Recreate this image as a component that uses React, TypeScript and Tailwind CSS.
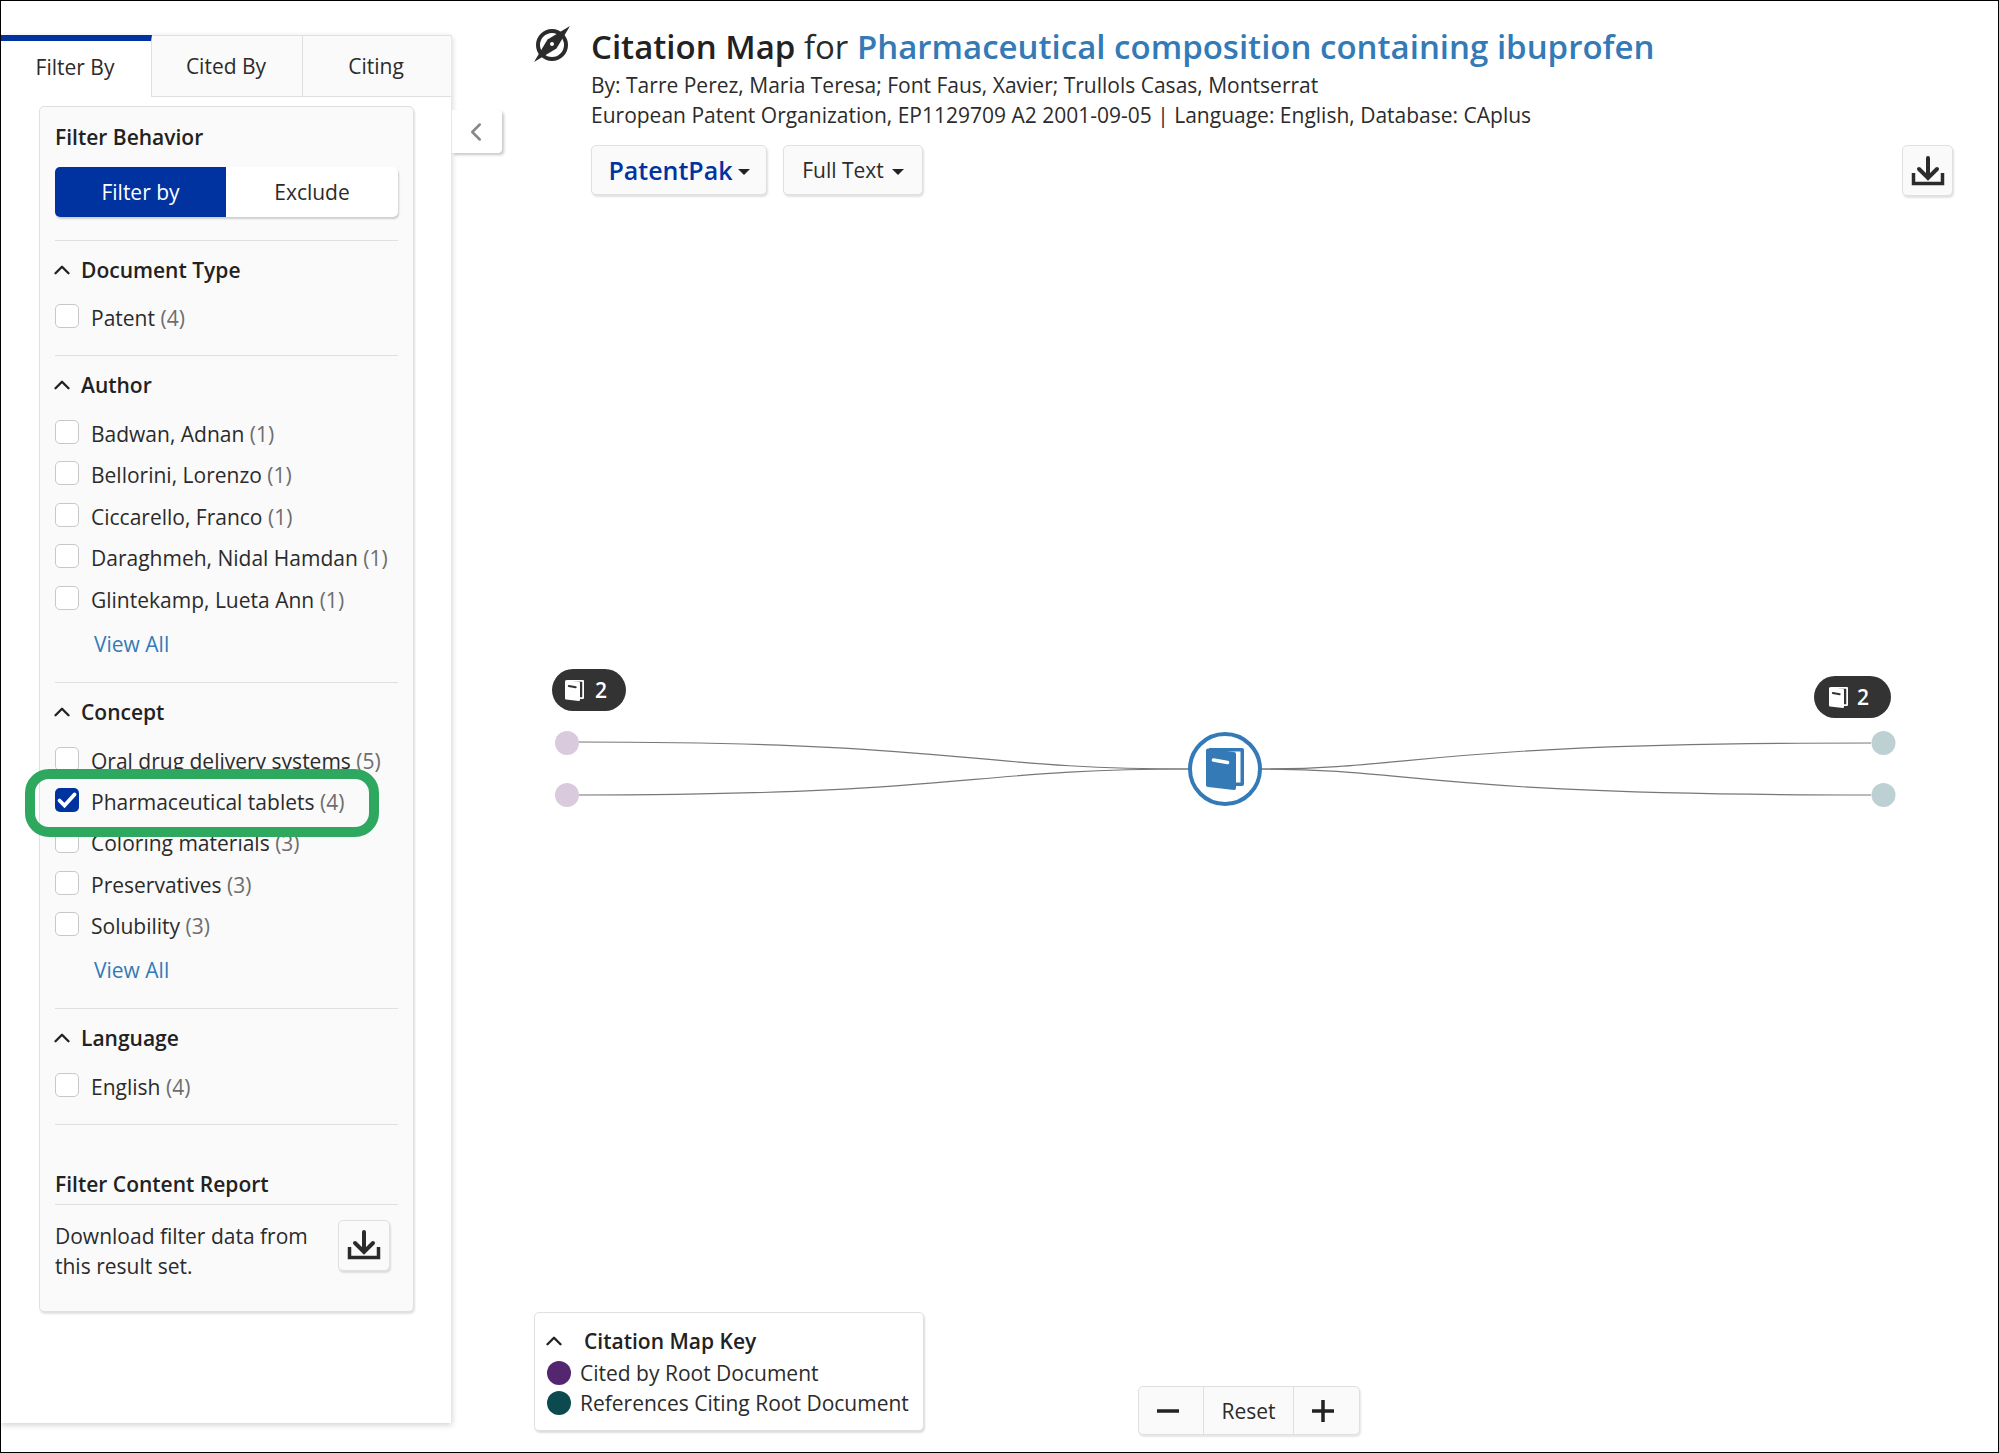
import { FiChevronLeft, FiChevronUp } from 'react-icons/fi';

const Chevron = () => (
  <FiChevronUp
    className="shrink-0 -ml-[6px] text-[#222]"
    size={26}
    strokeWidth={2.2}
  />
);

const DownloadIcon = () => (
  <svg
    fill="none"
    height="36"
    stroke="#2b2b2b"
    strokeWidth="4"
    viewBox="0 0 36 36"
    width="36"
  >
    <path
      d="M18 5v20M9 16l9 9 9-9"
      strokeLinecap="round"
    />
    <path
      d="M3.5 20v10.5h29V20"
      strokeWidth="3.5"
    />
  </svg>
);

const BookIcon = ({ color, cut }: { color: string; cut: string }) => (
  <svg
    height="100%"
    viewBox="0 0 38 42"
    width="100%"
  >
    <path
      d="M3 0h33a2 2 0 0 1 2 2v34a2 2 0 0 1-2 2h-8V6L3 3z"
      fill={color}
    />
    <path
      d="M16 3.6h18.5v30.9H30V6.2z"
      fill={cut}
    />
    <path
      d="M2 .5l26 3.5a2 2 0 0 1 2 2v34a2 2 0 0 1-2 2L2 39a2 2 0 0 1-2-2V2.5a2 2 0 0 1 2-2z"
      fill={color}
    />
    <path
      d="M7.5 12l14 2.5"
      stroke={cut}
      strokeLinecap="round"
      strokeWidth="3.6"
    />
  </svg>
);

const Check = ({ label, count, checked }: { label: string; count: number; checked?: boolean }) => (
  <div className="flex items-center h-[41.4px]">
    {checked ? (
      <span className="flex items-center justify-center w-6 h-6 mb-[4px] rounded-[5px] bg-[#0033a0]">
        <svg
          fill="none"
          height="24"
          stroke="white"
          strokeLinecap="round"
          strokeWidth="3.8"
          viewBox="0 0 24 24"
          width="24"
        >
          <path d="M4.5 12.5l5 5L19.5 6.5" />
        </svg>
      </span>
    ) : (
      <span className="w-6 h-6 mb-[4px] rounded-[5px] border border-[#c8c8c8] bg-white" />
    )}
    <span className="ml-3 text-[#2b2b2b]">
      {label} <span className="text-[#6e6e6e]">({count})</span>
    </span>
  </div>
);

const Section = ({ title, children }: { title: string; children: React.ReactNode }) => (
  <div className="border-t border-[#e0e0e0] pt-[14px]">
    <div className="flex items-center gap-[6px] h-[30px] font-semibold text-[#222]">
      <Chevron />
      {title}
    </div>
    <div className="mt-[13px]">{children}</div>
  </div>
);

const ViewAll = () => <div className="pl-[39px] h-[61.5px] pt-[8.5px] text-[#337ab7]">View All</div>;

const Badge = ({ className }: { className: string }) => (
  <div className={`absolute flex items-center h-[42px] rounded-full bg-[#333] text-white font-semibold ${className}`}>
    <span className="w-[19px] h-[21px]">
      <BookIcon
        color="white"
        cut="#333"
      />
    </span>
    <span>2</span>
  </div>
);

export default function App() {
  return (
    <div className="relative flex w-[1999px] h-[1453px] overflow-hidden border border-black bg-white font-['Open_Sans',sans-serif] text-[21px] leading-[30px] text-[#2b2b2b]">
      {/* left panel */}
      <aside className="mt-[34px] w-[451px] h-[1388px] shrink-0 border-r border-[#e8e8e8] bg-white shadow-[0_2px_6px_rgba(0,0,0,0.18)]">
        <div className="flex h-[62px]">
          <div className="flex items-center justify-center w-[151px] pb-[5px] pr-[2px] border-t-[6px] border-[#0033a0] border-r border-r-[#e0e0e0] box-border">
            Filter By
          </div>
          <div className="flex items-center justify-center w-[151px] pr-[2px] border-t border-b border-r border-[#e0e0e0] bg-[#fafafa]">
            Cited By
          </div>
          <div className="flex items-center justify-center flex-1 pr-[2px] border-t border-b border-[#e0e0e0] bg-[#fafafa]">
            Citing
          </div>
        </div>

        <div className="relative ml-[38px] mt-[9px] w-[375px] h-[1206px] rounded-[5px] border border-[#e0e0e0] bg-[#fafafa] px-[15px] pt-[15px] shadow-[1px_2px_2px_rgba(0,0,0,0.12)]">
          <div className="font-semibold h-[30px] text-[#222]">Filter Behavior</div>
          <div className="flex mt-[15px] h-[50px] rounded-[5px] bg-white shadow-[1px_2px_2px_rgba(0,0,0,0.18)]">
            <div className="flex items-center justify-center w-[171px] rounded-l-[5px] bg-[#0033a0] text-white">Filter by</div>
            <div className="flex items-center justify-center flex-1">Exclude</div>
          </div>
          <div className="mt-[23px]">
            <Section title="Document Type">
              <div className="-mt-[1px]">
                <Check
                  count={4}
                  label="Patent"
                />
              </div>
              <div className="h-[17px]" />
            </Section>
            <Section title="Author">
              <Check
                count={1}
                label="Badwan, Adnan"
              />
              <Check
                count={1}
                label="Bellorini, Lorenzo"
              />
              <Check
                count={1}
                label="Ciccarello, Franco"
              />
              <Check
                count={1}
                label="Daraghmeh, Nidal Hamdan"
              />
              <Check
                count={1}
                label="Glintekamp, Lueta Ann"
              />
              <ViewAll />
            </Section>
            <Section title="Concept">
              <Check
                count={5}
                label="Oral drug delivery systems"
              />
              <Check
                checked
                count={4}
                label="Pharmaceutical tablets"
              />
              <Check
                count={3}
                label="Coloring materials"
              />
              <Check
                count={3}
                label="Preservatives"
              />
              <Check
                count={3}
                label="Solubility"
              />
              <ViewAll />
            </Section>
            <Section title="Language">
              <Check
                count={4}
                label="English"
              />
              <div className="h-[16.5px]" />
            </Section>
          </div>
          <div className="border-t border-[#e0e0e0] pt-[43.5px]">
            <div className="font-semibold text-[#222] h-[36px] border-b border-[#e0e0e0]">Filter Content Report</div>
            <div className="flex items-start justify-between pt-[15px]">
              <div className="w-[275px] pt-[1px]">
                Download filter data from
                <br />
                this result set.
              </div>
              <button
                className="flex items-center justify-center w-[52px] h-[51px] mr-2 rounded-[5px] border border-[#e0e0e0] bg-[#fafafa] shadow-[1px_2px_2px_rgba(0,0,0,0.12)]"
                type="button"
              >
                <DownloadIcon />
              </button>
            </div>
          </div>
        </div>
      </aside>

      {/* collapse handle */}
      <div className="mt-[109px] flex items-center justify-center w-[50px] h-[43px] pr-[2px] shrink-0 rounded-r-[4px] bg-white shadow-[2px_2px_3px_rgba(0,0,0,0.22)]">
        <FiChevronLeft
          className="text-[#888]"
          size={30}
        />
      </div>

      {/* main */}
      <main className="relative flex-1 min-w-0 flex flex-col pl-[32px] pr-[45px]">
        <div className="flex gap-[21px] pt-[25px]">
          <svg
            className="shrink-0"
            height="36"
            viewBox="0 0 36 36"
            width="36"
          >
            <circle
              cx="18"
              cy="19"
              fill="none"
              r="14"
              stroke="#2b2b2b"
              strokeWidth="4"
            />
            <path
              d="M36 0L22.5 22.5 0 36l13.5-22.5z"
              fill="#2b2b2b"
            />
            <circle
              cx="18"
              cy="18"
              fill="white"
              r="2"
            />
          </svg>
          <div>
            <h1 className="text-[33px] leading-[46px] -mt-[2px]">
              <span className="font-semibold text-[#222]">Citation Map</span> for <span className="font-semibold text-[#337ab7]">Pharmaceutical composition containing ibuprofen</span>
            </h1>
            <p>By: Tarre Perez, Maria Teresa; Font Faus, Xavier; Trullols Casas, Montserrat</p>
            <p>European Patent Organization, EP1129709 A2 2001-09-05 | Language: English, Database: CAplus</p>
          </div>
        </div>

        <div className="flex items-start pl-[57px] mt-[15px]">
          <button
            className="flex items-center justify-center w-[176px] h-[50px] rounded-[5px] border border-[#e0e0e0] bg-[#fafafa] text-[25px] font-semibold text-[#0033a0] shadow-[1px_2px_2px_rgba(0,0,0,0.12)]"
            type="button"
          >
            PatentPak
            <span className="ml-[5px] mt-1 border-x-[6px] border-t-[6px] border-x-transparent border-t-[#222]" />
          </button>
          <button
            className="flex items-center justify-center w-[140px] h-[50px] ml-[16px] rounded-[5px] border border-[#e0e0e0] bg-[#fafafa] shadow-[1px_2px_2px_rgba(0,0,0,0.12)]"
            type="button"
          >
            Full Text
            <span className="ml-2 mt-1 border-x-[6px] border-t-[6px] border-x-transparent border-t-[#222]" />
          </button>
          <button
            className="flex items-center justify-center w-[51px] h-[51px] ml-auto rounded-[5px] border border-[#e0e0e0] bg-[#fafafa] shadow-[1px_2px_2px_rgba(0,0,0,0.12)]"
            type="button"
          >
            <DownloadIcon />
          </button>
        </div>

        <div className="flex-1" />

        <div className="flex items-end pb-[17px]">
          <div className="w-[390px] h-[119px] mb-[4px] rounded-[5px] border border-[#e0e0e0] bg-white pl-[12px] pt-[13px] shadow-[1px_2px_2px_rgba(0,0,0,0.14)]">
            <div className="flex items-center h-[30px] font-semibold text-[#222]">
              <Chevron />
              <span className="ml-[17px]">Citation Map Key</span>
            </div>
            <div className="flex items-center h-[30px] mt-[2px]">
              <span className="w-6 h-6 rounded-full bg-[#54266f]" />
              <span className="ml-[9px]">Cited by Root Document</span>
            </div>
            <div className="flex items-center h-[30px]">
              <span className="w-6 h-6 rounded-full bg-[#0d4a50]" />
              <span className="ml-[9px]">References Citing Root Document</span>
            </div>
          </div>
          <div className="flex items-center h-[49px] ml-[214px] rounded-[5px] border border-[#e0e0e0] bg-[#fafafa] shadow-[1px_2px_2px_rgba(0,0,0,0.1)]">
            <span className="flex items-center justify-center w-[65px] h-full pr-[6px] border-r border-[#e0e0e0]">
              <svg
                height="24"
                stroke="#222"
                strokeWidth="3.5"
                viewBox="0 0 24 24"
                width="24"
              >
                <path d="M1 12h22" />
              </svg>
            </span>
            <span className="flex items-center justify-center w-[90px] h-full border-r border-[#e0e0e0]">Reset</span>
            <span className="flex items-center justify-center w-[65px] h-full pr-[8px]">
              <svg
                height="24"
                stroke="#222"
                strokeWidth="3.5"
                viewBox="0 0 24 24"
                width="24"
              >
                <path d="M1 12h22M12 1v22" />
              </svg>
            </span>
          </div>
        </div>

        {/* map canvas */}
        <svg
          className="absolute left-0 top-0 pointer-events-none"
          height="1451"
          viewBox="502 1 1496 1451"
          width="1496"
        >
          <g
            fill="none"
            stroke="#777"
            strokeWidth="1.2"
          >
            <path d="M579 742 C 965 742, 965 769, 1190 769" />
            <path d="M579 795 C 965 795, 965 769, 1190 769" />
            <path d="M1260 769 C 1420 769, 1420 743, 1871 743" />
            <path d="M1260 769 C 1420 769, 1420 795, 1871 795" />
          </g>
          <circle
            cx="567"
            cy="743"
            fill="#d9cbdd"
            r="12"
          />
          <circle
            cx="567"
            cy="795"
            fill="#d9cbdd"
            r="12"
          />
          <circle
            cx="1883.5"
            cy="743"
            fill="#bdd1d4"
            r="12"
          />
          <circle
            cx="1883.5"
            cy="795"
            fill="#bdd1d4"
            r="12"
          />
          <circle
            cx="1225"
            cy="769"
            fill="white"
            r="35"
            stroke="#337ab7"
            strokeWidth="4"
          />
          <svg
            height="42"
            viewBox="0 0 38 42"
            width="38"
            x="1206"
            y="748"
          >
            <BookIcon
              color="#337ab7"
              cut="white"
            />
          </svg>
        </svg>
        <Badge className="left-[50px] top-[668px] w-[74px] pl-[13px] gap-[11px]" />
        <Badge className="left-[1312px] top-[675px] w-[77px] pl-[15px] gap-[9px]" />
      </main>

      {/* green highlight */}
      <div className="absolute left-[24px] top-[768px] w-[354px] h-[68px] rounded-[24px] border-[10px] border-[#2ea85f]" />
    </div>
  );
}
